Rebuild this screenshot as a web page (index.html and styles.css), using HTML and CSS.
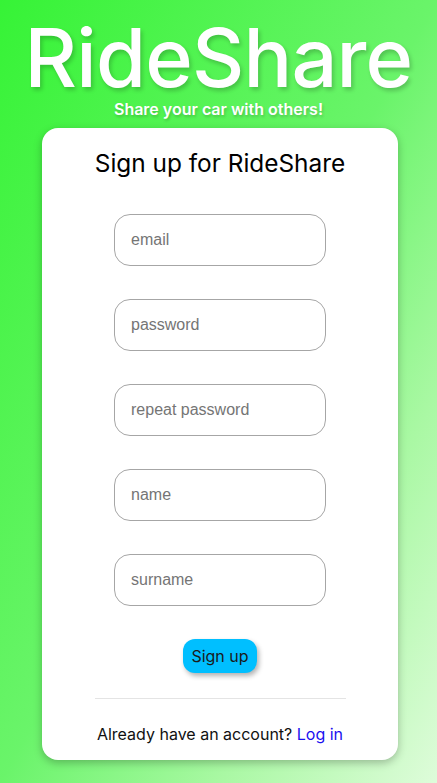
FILE: index.html
```html
<!DOCTYPE html>
<html lang="en">
<head>
<meta charset="utf-8">
<title>RideShare - Sign up</title>
<link rel="stylesheet" href="styles.css">
</head>
<body>
  <header class="hero">
    <h1 class="brand">RideShare</h1>
    <p class="tagline">Share your car with others!</p>
  </header>
  <main class="card">
    <h2 class="card-title">Sign up for RideShare</h2>
    <form class="form">
      <input class="field" type="email" placeholder="email">
      <input class="field" type="password" placeholder="password">
      <input class="field" type="password" placeholder="repeat password">
      <input class="field" type="text" placeholder="name">
      <input class="field" type="text" placeholder="surname">
      <button class="btn" type="button">Sign up</button>
    </form>
    <hr class="divider">
    <p class="login">Already have an account? <a href="#" class="login-link">Log in</a></p>
  </main>
</body>
</html>
```
FILE: styles.css
```css
html, body {
  margin: 0;
  padding: 0;
}
body {
  min-height: 783px;
  background: linear-gradient(to bottom right, #36f336 0%, #6af46a 50%, #a9f8a3 75%, #defcda 100%);
  font-family: Inter, "Noto Sans", sans-serif;
  color: #000;
  overflow: hidden;
}
.hero {
  text-align: center;
  color: #fff;
  padding-top: 18px;
}
.brand {
  margin: 0 0 1px;
  font-size: 81px;
  line-height: 81px;
  font-weight: 550;
  letter-spacing: -0.8px;
  text-shadow: 2px 3px 4px rgba(0, 0, 0, 0.2);
}
.tagline {
  margin: 0;
  font-size: 16px;
  line-height: 19px;
  font-weight: 600;
  text-shadow: 1px 2px 3px rgba(0, 0, 0, 0.2);
}
.card {
  width: 356px;
  margin: 9px 0 0 42px;
  background: #fff;
  border-radius: 16px;
  box-shadow: 0 3px 8px rgba(0, 0, 0, 0.25);
  padding: 20px 0 16px;
  box-sizing: border-box;
  display: flex;
  flex-direction: column;
  align-items: center;
}
.card-title {
  margin: 0 0 36px;
  font-size: 24.4px;
  font-weight: 400;
}
.form {
  display: flex;
  flex-direction: column;
  align-items: center;
  gap: 33px;
}
.field {
  width: 212px;
  height: 52px;
  box-sizing: border-box;
  border: 1px solid #a6a6a6;
  border-radius: 16px;
  padding: 0 16px;
  font-family: "Liberation Sans", Arial, sans-serif;
  font-size: 16px;
  outline: none;
}
.field::placeholder {
  color: #757575;
}
.btn {
  background: #00bfff;
  border: none;
  border-radius: 12px;
  padding: 7px 8px;
  font-family: Inter, "Noto Sans", sans-serif;
  font-size: 16px;
  color: #1a1a1a;
  box-shadow: 2px 3px 5px rgba(0, 0, 0, 0.3);
  cursor: pointer;
}
.divider {
  width: 251px;
  margin: 25px 0 25px;
  border: none;
  border-top: 1px solid #e4e4e4;
}
.login {
  margin: 0;
  font-size: 16px;
  color: #111;
}
.login-link {
  color: #1a0ff0;
  text-decoration: none;
}
```
